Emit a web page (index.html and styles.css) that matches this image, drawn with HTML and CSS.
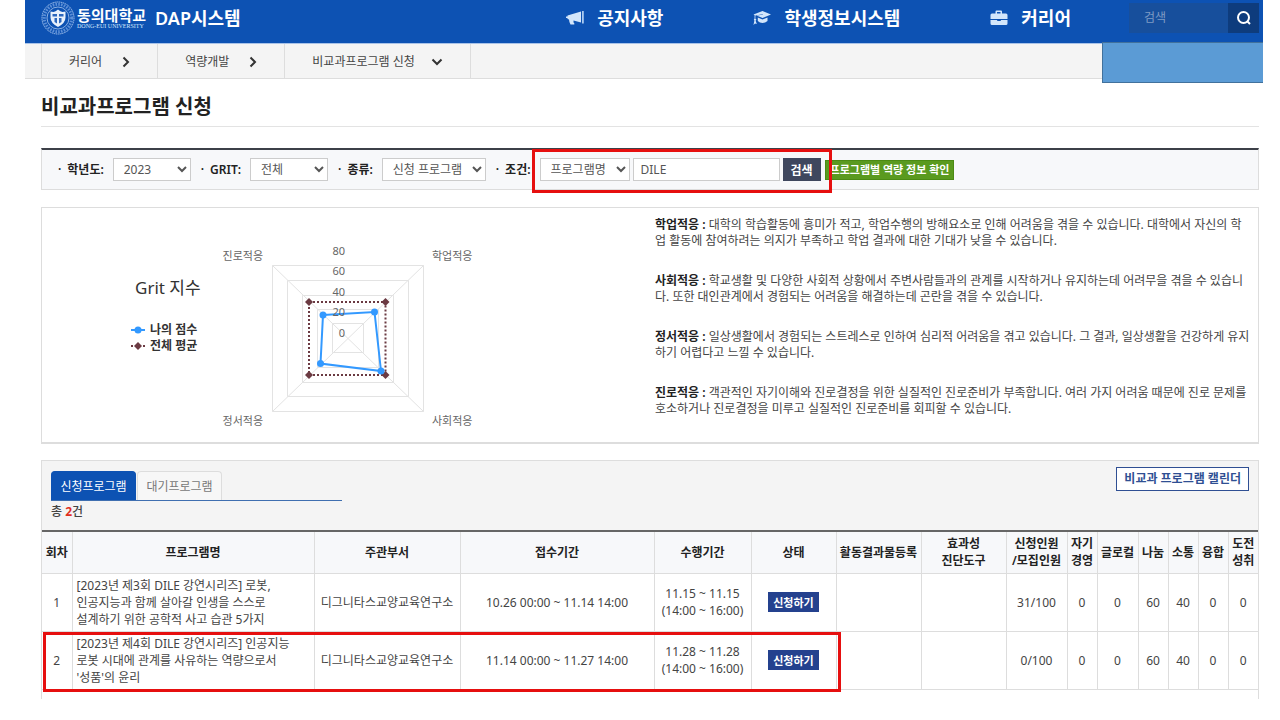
FILE: index.html
```
<!DOCTYPE html>
<html lang="ko">
<head>
  <meta charset="UTF-8" />
  <meta name="viewport" content="width=device-width, initial-scale=1.0" />
  <title>비교과프로그램 신청</title>
  <link rel="stylesheet" href="styles.css">
</head>
<body>
  <header class="header">
    <a class="logo" href="#">
      <svg class="seal" viewBox="0 0 34 34" aria-hidden="true">
        <circle cx="17" cy="17" r="16" fill="none" stroke="#a9c6ee" stroke-width="1" stroke-dasharray="1.4 .6" />
        <circle cx="17" cy="17" r="13.7" fill="none" stroke="#5d90d8" stroke-width="3" stroke-dasharray="1.6 1.2" />
        <circle cx="17" cy="17" r="11" fill="#0d52b3" stroke="#a9c6ee" stroke-width=".8" />
        <path d="M9.500 10.500l3 .5q2-.5 4.500-2.500 2.500 2 4.500 2.500l3-.5v6q0 5.500-7.500 9.500-7.500-4-7.500-9.500z" fill="#e8f1fc" />
        <path d="M11.500 13h4.500v2.500h-4.500zM18 13h4.500v2.500H18zM13.500 17h2.500v5.500l-2.500-1.500zM18 17h2.500v4L18 22.500z" fill="#2d68bd" />
      </svg>
      <span class="univ">
        <strong>동의대학교</strong>
        <small>DONG-EUI UNIVERSITY</small>
      </span>
      <span class="system">DAP시스템</span>
    </a>
    <nav class="menu">
      <a href="#">
        <svg width="18" height="16" viewBox="0 0 18 16" aria-hidden="true">
          <path d="M0 6.500h1.500V5.500L15 1.500v11L7.500 10.500v1.500q0 1 .8 1.200v1.300H4.500q-1.500-3-1.500-5l-1.500-.5V8H0z" fill="#d3e6fb" />
          <path d="M16 1h1.800v12.500H16z" fill="#a9c9ef" />
        </svg>
        공지사항
      </a>
      <a href="#">
        <svg width="18" height="16" viewBox="0 0 18 16" aria-hidden="true">
          <path d="M9.500 1L18 4.500 9.500 8 3.500 5.600 9.800 4.800 9.700 4.300 2.400 5.500v3.200l1 .8-.8 1.200 1.200 3.300-1.800-.5-1.500 1.500.9-4.500-.6-.9.800-1V5.300L.5 4.500z" fill="#d3e6fb" />
          <path d="M4.800 7.500l4.700 2 5-2.100v3.600q-2.200 2-5 2t-4.700-2z" fill="#d3e6fb" />
        </svg>
        학생정보시스템
      </a>
      <a href="#">
        <svg width="18" height="16" viewBox="0 0 18 16" aria-hidden="true">
          <path d="M5.500 3.500V1.500q0-1 1-1h4.500q1 0 1 1v2h4q1.500 0 1.500 1.500v4H.5V5Q.5 3.500 2 3.500zM7 3.500h3.500V2H7z" fill="#d3e6fb" fill-rule="evenodd" />
          <path d="M.5 10h6.700v1h3.600v-1h6.700v3.500q0 1.500-1.500 1.500H2Q.5 15 .5 13.500z" fill="#d3e6fb" />
        </svg>
        커리어
      </a>
    </nav>
    <form class="site-search">
      <input type="text" placeholder="검색" aria-label="검색" />
      <button type="button" aria-label="검색">
        <svg width="16" height="16" viewBox="0 0 16 16" fill="none" stroke="#fff" stroke-width="2" aria-hidden="true">
          <circle cx="7.500" cy="7.500" r="5.500" />
          <path d="M11 11l3 3" />
        </svg>
      </button>
    </form>
  </header>

  <nav class="crumbs">
    <a href="#">커리어
      <svg width="8" height="12" viewBox="0 0 8 12" aria-hidden="true"><path d="M1.500 1.500L6 6l-4.500 4.500" /></svg>
    </a>
    <a href="#">역량개발
      <svg width="8" height="12" viewBox="0 0 8 12" aria-hidden="true"><path d="M1.500 1.500L6 6l-4.500 4.500" /></svg>
    </a>
    <a href="#" class="current">비교과프로그램 신청
      <svg width="12" height="8" viewBox="0 0 12 8" aria-hidden="true"><path d="M1.500 1.500L6 6l4.500-4.500" /></svg>
    </a>
    <div class="cover"></div>
  </nav>

  <main class="content">
    <h1>비교과프로그램 신청</h1>

    <form class="filter">
      <label for="year">학년도:</label>
      <select id="year"><option>2023</option></select>
      <label for="grit">GRIT:</label>
      <select id="grit"><option>전체</option></select>
      <label for="kind">종류:</label>
      <select id="kind" class="kind"><option>신청 프로그램</option></select>
      <label for="cond">조건:</label>
      <div class="keyword">
        <select id="cond" class="cond"><option>프로그램명</option></select>
        <input type="text" value="DILE" aria-label="검색어" />
        <button type="button">검색</button>
        <div class="mark mark-search"></div>
      </div>
      <button type="button" class="info">프로그램별 역량 정보 확인</button>
    </form>

    <section class="grit">
      <svg class="chart" width="560" height="234" viewBox="0 0 560 234">
        <text x="93" y="86" class="chart-title">Grit 지수</text>

        <g stroke="#3399ff" stroke-width="2" fill="#3399ff">
          <path d="M89 122h14" />
          <circle cx="96" cy="122" r="3.500" stroke="none" />
        </g>
        <text x="108" y="126" class="legend">나의 점수</text>
        <path d="M89 138h14" stroke="#6b3a42" stroke-width="2" stroke-dasharray="2 2" />
        <path d="M96 134l4 4-4 4-4-4z" fill="#6b3a42" />
        <text x="108" y="142" class="legend">전체 평균</text>

        <g fill="none" stroke="#e3e3e3">
          <path d="M230.500 57.500h151v146h-151z" />
          <path d="M245.500 72.500h121v116h-121z" />
          <path d="M260.500 87.500h91v87h-91z" />
          <path d="M275.500 101.500h61v58h-61z" />
          <path d="M290.500 115.500h31v29h-31z" />
          <path d="M230.500 57.500l151 146M381.500 57.500l-151 146" />
        </g>
        <path d="M267 94h76.500v73H267z" fill="none" stroke="#6b3a42" stroke-width="2" stroke-dasharray="2 2" />
        <g fill="#6b3a42">
          <path d="M267 90l4 4-4 4-4-4z" />
          <path d="M343.500 90l4 4-4 4-4-4z" />
          <path d="M343.500 163l4 4-4 4-4-4z" />
          <path d="M267 163l4 4-4 4-4-4z" />
        </g>
        <path d="M281 107l51.500-3 6.500 59-60.500-7.500z" fill="none" stroke="#3399ff" stroke-width="2" />
        <g fill="#3399ff">
          <circle cx="281" cy="107" r="3.500" />
          <circle cx="332.500" cy="104" r="3.500" />
          <circle cx="339" cy="163" r="3.500" />
          <circle cx="278.500" cy="155.500" r="3.500" />
        </g>

        <g class="axis" text-anchor="end">
          <text x="303" y="47">80</text>
          <text x="303" y="67">60</text>
          <text x="303" y="88">40</text>
          <text x="303" y="108">20</text>
          <text x="303" y="129">0</text>
          <text x="221" y="52">진로적응</text>
          <text x="221" y="217">정서적응</text>
        </g>
        <g class="axis">
          <text x="390" y="52">학업적응</text>
          <text x="390" y="217">사회적응</text>
        </g>
      </svg>
      <div class="desc">
        <p><strong>학업적응 :</strong> 대학의 학습활동에 흥미가 적고, 학업수행의 방해요소로 인해 어려움을 겪을 수 있습니다. 대학에서 자신의 학업 활동에 참여하려는 의지가 부족하고 학업 결과에 대한 기대가 낮을 수 있습니다.</p>
        <p><strong>사회적응 :</strong> 학교생활 및 다양한 사회적 상황에서 주변사람들과의 관계를 시작하거나 유지하는데 어려무을 겪을 수 있습니다. 또한 대인관계에서 경험되는 어려움을 해결하는데 곤란을 겪을 수 있습니다.</p>
        <p><strong>정서적응 :</strong> 일상생활에서 경험되는 스트레스로 인하여 심리적 어려움을 겪고 있습니다. 그 결과, 일상생활을 건강하게 유지하기 어렵다고 느낄 수 있습니다.</p>
        <p><strong>진로적응 :</strong> 객관적인 자기이해와 진로결정을 위한 실질적인 진로준비가 부족합니다. 여러 가지 어려움 때문에 진로 문제를 호소하거나 진로결정을 미루고 실질적인 진로준비를 회피할 수 있습니다.</p>
      </div>
    </section>

    <section class="list">
      <div class="list-head">
        <div>
          <div class="tabs">
            <button type="button" class="tab on">신청프로그램</button>
            <button type="button" class="tab">대기프로그램</button>
          </div>
          <p class="total">총 <em>2</em>건</p>
        </div>
        <button type="button" class="calendar">비교과 프로그램 캘린더</button>
      </div>
      <div class="table-wrap">
        <table>
          <colgroup>
            <col class="w-s"><col><col class="w-dept"><col class="w-apply"><col class="w-run">
            <col class="w-m"><col class="w-m"><col class="w-m"><col class="w-people"><col class="w-s">
            <col class="w-global"><col class="w-s"><col class="w-s"><col class="w-s"><col class="w-s">
          </colgroup>
          <thead>
            <tr>
              <th>회차</th>
              <th>프로그램명</th>
              <th>주관부서</th>
              <th>접수기간</th>
              <th>수행기간</th>
              <th>상태</th>
              <th>활동결과물등록</th>
              <th>효과성<br>진단도구</th>
              <th>신청인원<br>/모집인원</th>
              <th>자기<br>경영</th>
              <th>글로컬</th>
              <th>나눔</th>
              <th>소통</th>
              <th>융합</th>
              <th>도전<br>성취</th>
            </tr>
          </thead>
          <tbody>
            <tr>
              <td>1</td>
              <td class="name">[2023년 제3회 DILE 강연시리즈] 로봇,<br>인공지능과 함께 살아갈 인생을 스스로<br>설계하기 위한 공학적 사고 습관 5가지</td>
              <td>디그니타스교양교육연구소</td>
              <td>10.26 00:00 ~ 11.14 14:00</td>
              <td>11.15 ~ 11.15<br>(14:00 ~ 16:00)</td>
              <td><button type="button" class="apply">신청하기</button></td>
              <td></td>
              <td></td>
              <td>31/100</td>
              <td>0</td>
              <td>0</td>
              <td>60</td>
              <td>40</td>
              <td>0</td>
              <td>0</td>
            </tr>
            <tr>
              <td>2</td>
              <td class="name">[2023년 제4회 DILE 강연시리즈] 인공지능<br>로봇 시대에 관계를 사유하는 역량으로서<br>'성품'의 윤리</td>
              <td>디그니타스교양교육연구소</td>
              <td>11.14 00:00 ~ 11.27 14:00</td>
              <td>11.28 ~ 11.28<br>(14:00 ~ 16:00)</td>
              <td><button type="button" class="apply">신청하기</button></td>
              <td></td>
              <td></td>
              <td>0/100</td>
              <td>0</td>
              <td>0</td>
              <td>60</td>
              <td>40</td>
              <td>0</td>
              <td>0</td>
            </tr>
          </tbody>
        </table>
        <div class="mark mark-row"></div>
      </div>
    </section>
  </main>
</body>
</html>
```

FILE: styles.css
```
* {
  box-sizing: border-box;
}
body {
  margin: 0 17px 0 25px;
  background: #fff;
  color: #444;
  font-family: "Noto Sans", "Noto Sans CJK KR", sans-serif;
  font-size: 12px;
  line-height: 16px;
}
a {
  color: inherit;
  text-decoration: none;
}
button, input, select {
  font-family: inherit;
  font-size: 12px;
  margin: 0;
}
button {
  padding: 0;
  border: 0;
  cursor: pointer;
}

/* header */
.header {
  display: flex;
  align-items: center;
  height: 44px;
  padding: 0 4px 8px 16px;
  background: #0d52b3;
  border-bottom: 1px solid #a9c3e8;
  color: #fff;
}
.logo {
  display: flex;
  align-items: center;
  margin-right: auto;
}
.seal {
  width: 34px;
  height: 34px;
}
.univ {
  display: flex;
  flex-direction: column;
  margin: 0 9px 0 2px;
}
.univ strong {
  font-size: 15px;
  line-height: 16px;
  font-weight: 600;
}
.univ small {
  font-family: "Liberation Serif", serif;
  font-size: 6px;
  line-height: 6px;
  color: #d3e6fb;
}
.system, .menu a {
  font-size: 18px;
  line-height: 24px;
  font-weight: 600;
}
.menu {
  display: flex;
  gap: 90px;
}
.menu a {
  display: flex;
  align-items: center;
  gap: 13px;
}
.site-search {
  display: flex;
  width: 130px;
  height: 30px;
  margin-left: 58px;
}
.site-search input {
  flex: 1;
  min-width: 0;
  padding: 0 15px;
  border: 0;
  background: #174f9c;
  color: #fff;
}
.site-search input::placeholder {
  color: #7f9bc4;
}
.site-search button {
  display: flex;
  align-items: center;
  justify-content: center;
  width: 31px;
  background: #0e3c7d;
}

/* breadcrumb */
.crumbs {
  position: relative;
  display: flex;
  height: 35px;
  padding-left: 16px;
  background: #f4f4f4;
  border-bottom: 1px solid #ddd;
}
.crumbs a {
  display: flex;
  align-items: center;
  gap: 20px;
  padding: 2px 27px 0;
  border-right: 1px solid #ddd;
}
.crumbs a:first-child {
  border-left: 1px solid #ddd;
}
.crumbs .current {
  gap: 16px;
}
.crumbs svg {
  fill: none;
  stroke: #333;
  stroke-width: 2;
}
.cover {
  position: absolute;
  top: -2px;
  right: -1px;
  width: 162px;
  height: 41px;
  background: #5b9bd5;
  border: 1px solid #41719c;
}

/* content */
.content {
  padding: 0 4px 0 16px;
}
h1 {
  margin: 0 0 21px;
  padding: 18px 0 9px;
  border-bottom: 1px solid #e3e3e3;
  color: #222;
  font-size: 20px;
  line-height: 20px;
  font-weight: 600;
}
.filter {
  display: flex;
  align-items: center;
  height: 42px;
  margin-bottom: 17px;
  padding-left: 16px;
  background: #f7f8fa;
  border: 1px solid #ddd;
  border-top: 2px solid #3c4048;
}
.filter label {
  margin-right: 9px;
  color: #222;
  font-weight: 600;
}
.filter label::before {
  content: "·";
  margin-right: 6px;
}
.filter select, .filter input {
  height: 23px;
  border: 1px solid #ccc;
  border-radius: 0;
  background: #fff;
  color: #555;
}
.filter select {
  width: 78px;
  margin-right: 10px;
  padding-left: 6px;
}
.filter .kind {
  width: 104px;
}
.filter .keyword {
  position: relative;
  display: flex;
  gap: 3px;
}
.filter .cond {
  width: 90px;
  margin-right: 0;
}
.filter input {
  width: 147px;
  padding: 0 7px;
}
.keyword button {
  width: 38px;
  background: #3f475e;
  color: #fff;
  font-weight: 600;
}
.info {
  height: 20px;
  margin-left: 4px;
  padding: 0 4px;
  background: #5a9a1f;
  border: 1px solid #4b8a14;
  color: #fff;
  font-size: 11px;
  font-weight: 600;
  line-height: 16px;
}
.mark {
  position: absolute;
  border: 3px solid #e60f0f;
  pointer-events: none;
}
.mark-search {
  inset: -9px -11px -12px -8px;
}

/* grit chart */
.grit {
  display: flex;
  justify-content: space-between;
  margin-bottom: 16px;
  border: 1px solid #ddd;
  border-bottom-width: 2px;
}
.chart {
  flex: none;
}
.chart text {
  fill: #666;
  font-size: 11px;
}
.chart .chart-title {
  fill: #333;
  font-size: 17px;
}
.chart .legend {
  fill: #333;
  font-size: 12px;
  font-weight: 600;
}
.desc {
  flex: none;
  width: 603px;
  padding: 9px 8px 0 0;
}
.desc p {
  margin: 0 0 24px;
}
.desc strong {
  color: #222;
  font-weight: 600;
}

/* program list */
.list {
  padding-bottom: 9px;
  border: 1px solid #ddd;
  border-bottom: 0;
}
.list-head {
  display: flex;
  justify-content: space-between;
  align-items: flex-start;
  height: 69px;
  padding: 6px 9px 0;
  background: #f4f4f4;
}
.tabs {
  display: flex;
  gap: 1px;
  width: 291px;
  margin: 4px 0 3px;
  border-bottom: 1px solid #3f6fb0;
}
.tab {
  width: 85px;
  height: 29px;
  border: 1px solid #ddd;
  border-bottom: 0;
  border-radius: 4px 4px 0 0;
  background: #f7f7f7;
  color: #777;
}
.tab.on {
  border-color: #0d52b3;
  background: #0d52b3;
  color: #fff;
}
.total {
  margin: 0;
  font-weight: 500;
}
.total em {
  color: #e0301e;
  font-style: normal;
  font-weight: 700;
}
.calendar {
  height: 24px;
  padding: 0 7px;
  border: 1px solid #2f4f93;
  background: #fff;
  color: #2f4f93;
  font-weight: 600;
  line-height: 20px;
}
.table-wrap {
  position: relative;
}
table {
  width: 100%;
  table-layout: fixed;
  border-collapse: collapse;
  border-top: 2px solid #666;
  line-height: 17px;
}
.w-s { width: 30px; }
.w-m { width: 85px; }
.w-dept { width: 146px; }
.w-apply { width: 194px; }
.w-run { width: 97px; }
.w-people { width: 61px; }
.w-global { width: 41px; }
th, td {
  padding: 0;
  border: 1px solid #ddd;
  text-align: center;
  white-space: nowrap;
}
th {
  height: 42px;
  background: #f7f8fa;
  border-top: 0;
  color: #222;
  font-weight: 600;
}
td {
  height: 58px;
}
tr > :first-child {
  border-left: 0;
}
tr > :last-child {
  border-right: 0;
}
.name {
  padding-left: 4px;
  text-align: left;
}
.apply {
  height: 20px;
  padding: 0 5px;
  background: #24418e;
  color: #fff;
  font-size: 11px;
  font-weight: 600;
}
.mark-row {
  left: 1px;
  right: 417px;
  bottom: -2px;
  height: 60px;
}
```
